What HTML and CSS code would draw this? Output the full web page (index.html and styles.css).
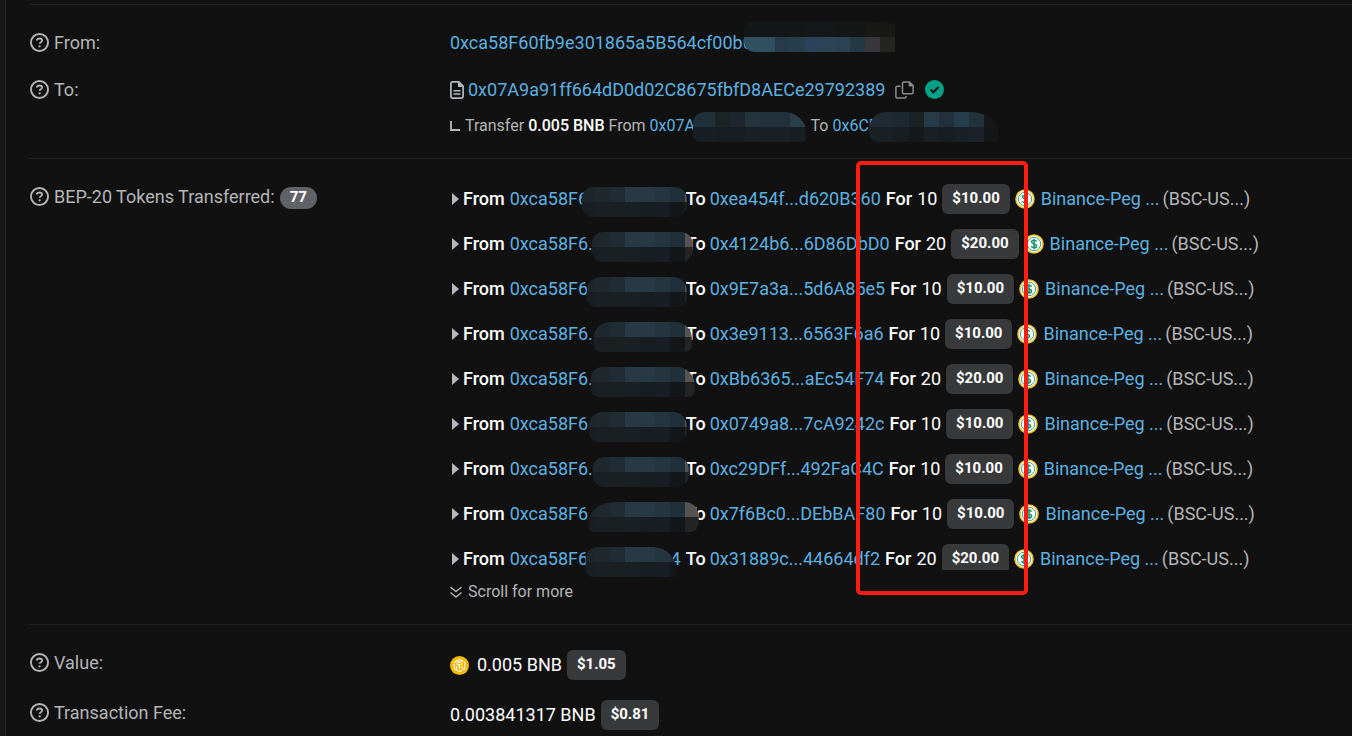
FILE: index.html
```html
<!DOCTYPE html>
<html lang="en">
<head>
  <meta charset="UTF-8">
  <meta name="viewport" content="width=device-width, initial-scale=1.0">
  <title>Transaction Details</title>
  <link rel="stylesheet" href="styles.css">
</head>

<body>
  <!-- shared icons -->
  <svg class="sprite" aria-hidden="true">
    <symbol id="help" viewBox="0 0 18 18">
      <circle cx="9" cy="9" r="8.1" fill="none" stroke="currentColor" stroke-width="1.8"/>
      <path d="M6.5 7.1C6.6 5.8 7.5 5.2 9 5.2s2.5.7 2.5 1.9c0 1.7-2.4 1.6-2.4 3.2" fill="none" stroke="currentColor" stroke-width="1.7"/>
      <circle cx="9.1" cy="12.6" r="1.1" fill="currentColor"/>
    </symbol>
    <symbol id="coin" viewBox="0 0 20 20">
      <circle cx="10" cy="10" r="9.8" fill="#f2c230"/>
      <circle cx="10" cy="10" r="8.2" fill="#fff"/>
      <circle cx="10" cy="10" r="6.7" fill="none" stroke="#2fa57f" stroke-width="1"/>
      <path d="M12.5 7.7c-.3-1-1.2-1.4-2.5-1.4s-2.4.6-2.4 1.7c0 2.6 5 1.2 5 3.9 0 1.2-1.1 1.8-2.6 1.8s-2.4-.6-2.7-1.6M10 4.8v10.4" fill="none" stroke="#159267" stroke-width="1.5"/>
    </symbol>
  </svg>

  <main class="card">
    <section class="group">
      <div class="row">
        <div class="label"><svg class="help"><use href="#help"/></svg>From:</div>
        <div class="value">
          <a href="#" class="address">0xca58F60fb9e301865a5B564cf00b0<span class="mask mask-from"></span></a>
        </div>
      </div>
      <div class="row">
        <div class="label"><svg class="help"><use href="#help"/></svg>To:</div>
        <div class="value">
          <div class="contract">
            <svg class="file" viewBox="0 0 14 18" fill="none" stroke="#b5b9bd" stroke-width="1.7">
              <path d="M2.5.9h6.3l4.3 4.3v10.4c0 .9-.6 1.5-1.5 1.5H2.5c-.9 0-1.6-.6-1.6-1.5V2.4C.9 1.500 1.600.9 2.500.9z"/>
              <path d="M8.500 1v4.500H13z" fill="#b5b9bd" stroke-width="1"/>
              <path d="M3.500 9.700h7M3.500 13h7" stroke-width="1.500"/>
            </svg>
            <a href="#" class="address">0x07A9a91ff664dD0d02C8675fbfD8AECe29792389</a>
            <button class="copy" aria-label="Copy address">
              <svg viewBox="0 0 19 18" fill="none" stroke="#8c8c8e" stroke-width="1.500">
                <path d="M8.800.9h5.600l3.700 3.700v6.800c0 .8-.5 1.300-1.300 1.300H8.800c-.8 0-1.300-.5-1.300-1.300V2.200c0-.8.5-1.300 1.300-1.300z"/>
                <path d="M14 1v4h4z" fill="#8c8c8e" stroke-width=".8"/>
                <path d="M5.500 5.300H2.200c-.8 0-1.300.5-1.300 1.300v9.200c0 .8.500 1.300 1.300 1.300h7.600c.8 0 1.300-.5 1.300-1.300v-.9"/>
              </svg>
            </button>
            <svg class="verified" viewBox="0 0 18 18">
              <circle cx="9" cy="9" r="9" fill="#00a186"/>
              <path d="M5.300 9l2.600 2.600 4.900-4.900" fill="none" stroke="#111" stroke-width="1.900"/>
            </svg>
          </div>
          <div class="internal">
            <svg class="corner" viewBox="0 0 10 10"><path d="M1 0v9h9" fill="none" stroke="#b5b9bd" stroke-width="1.800"/></svg>
            <span>Transfer</span>
            <b>0.005 BNB</b>
            <span>From</span>
            <a href="#" class="address internal-from">0x07A<span class="mask mask-internal-from"></span></a>
            <span>To</span>
            <a href="#" class="address">0x6CF<span class="mask mask-internal-to"></span></a>
          </div>
        </div>
      </div>
    </section>

    <section class="group">
      <div class="row">
        <div class="label"><svg class="help"><use href="#help"/></svg>BEP-20 Tokens Transferred: <span class="count">77</span></div>
        <div class="value">
          <ul class="transfers">
            <li>
              <i class="caret"></i><b>From</b>
              <a href="#" class="address sender">0xca58F6.<span class="mask mask-sender m1"></span></a>
              <b class="to">To</b> <a href="#" class="address">0xea454f...d620B360</a>
              <b>For</b> <span class="amount">10</span> <span class="badge">$10.00</span>
              <svg class="coin"><use href="#coin"/></svg>
              <a href="#" class="token">Binance-Peg ...</a><span class="symbol">(BSC-US...)</span>
            </li>
            <li>
              <i class="caret"></i><b>From</b>
              <a href="#" class="address sender">0xca58F6.<span class="mask mask-sender m2"></span></a>
              <b class="to">To</b> <a href="#" class="address">0x4124b6...6D86DbD0</a>
              <b>For</b> <span class="amount">20</span> <span class="badge">$20.00</span>
              <svg class="coin"><use href="#coin"/></svg>
              <a href="#" class="token">Binance-Peg ...</a><span class="symbol">(BSC-US...)</span>
            </li>
            <li>
              <i class="caret"></i><b>From</b>
              <a href="#" class="address sender">0xca58F6.<span class="mask mask-sender m3"></span></a>
              <b class="to">To</b> <a href="#" class="address">0x9E7a3a...5d6A85e5</a>
              <b>For</b> <span class="amount">10</span> <span class="badge">$10.00</span>
              <svg class="coin"><use href="#coin"/></svg>
              <a href="#" class="token">Binance-Peg ...</a><span class="symbol">(BSC-US...)</span>
            </li>
            <li>
              <i class="caret"></i><b>From</b>
              <a href="#" class="address sender">0xca58F6.<span class="mask mask-sender m4"></span></a>
              <b class="to">To</b> <a href="#" class="address">0x3e9113...6563F6a6</a>
              <b>For</b> <span class="amount">10</span> <span class="badge">$10.00</span>
              <svg class="coin"><use href="#coin"/></svg>
              <a href="#" class="token">Binance-Peg ...</a><span class="symbol">(BSC-US...)</span>
            </li>
            <li>
              <i class="caret"></i><b>From</b>
              <a href="#" class="address sender">0xca58F6.<span class="mask mask-sender m5"></span></a>
              <b class="to">To</b> <a href="#" class="address">0xBb6365...aEc54F74</a>
              <b>For</b> <span class="amount">20</span> <span class="badge">$20.00</span>
              <svg class="coin"><use href="#coin"/></svg>
              <a href="#" class="token">Binance-Peg ...</a><span class="symbol">(BSC-US...)</span>
            </li>
            <li>
              <i class="caret"></i><b>From</b>
              <a href="#" class="address sender">0xca58F6.<span class="mask mask-sender m6"></span></a>
              <b class="to">To</b> <a href="#" class="address">0x0749a8...7cA9242c</a>
              <b>For</b> <span class="amount">10</span> <span class="badge">$10.00</span>
              <svg class="coin"><use href="#coin"/></svg>
              <a href="#" class="token">Binance-Peg ...</a><span class="symbol">(BSC-US...)</span>
            </li>
            <li>
              <i class="caret"></i><b>From</b>
              <a href="#" class="address sender">0xca58F6.<span class="mask mask-sender m7"></span></a>
              <b class="to">To</b> <a href="#" class="address">0xc29DFf...492FaC4C</a>
              <b>For</b> <span class="amount">10</span> <span class="badge">$10.00</span>
              <svg class="coin"><use href="#coin"/></svg>
              <a href="#" class="token">Binance-Peg ...</a><span class="symbol">(BSC-US...)</span>
            </li>
            <li>
              <i class="caret"></i><b>From</b>
              <a href="#" class="address sender">0xca58F6.<span class="mask mask-sender m8"></span></a>
              <b class="to">To</b> <a href="#" class="address">0x7f6Bc0...DEbBAF80</a>
              <b>For</b> <span class="amount">10</span> <span class="badge">$10.00</span>
              <svg class="coin"><use href="#coin"/></svg>
              <a href="#" class="token">Binance-Peg ...</a><span class="symbol">(BSC-US...)</span>
            </li>
            <li>
              <i class="caret"></i><b>From</b>
              <a href="#" class="address sender">0xca58F6.<span>4</span><span class="mask mask-sender m9"></span></a>
              <b class="to">To</b> <a href="#" class="address">0x31889c...44664df2</a>
              <b>For</b> <span class="amount">20</span> <span class="badge">$20.00</span>
              <svg class="coin"><use href="#coin"/></svg>
              <a href="#" class="token">Binance-Peg ...</a><span class="symbol">(BSC-US...)</span>
            </li>
          </ul>
          <div class="more">
            <svg class="chevrons" viewBox="0 0 12 12"><path d="M.5 1L6 5.500 11.500 1M.5 6.500L6 11l5.500-4.500" fill="none" stroke="currentColor" stroke-width="1.400"/></svg>
            Scroll for more
          </div>
          <div class="highlight"></div>
        </div>
      </div>
    </section>

    <section class="group">
      <div class="row">
        <div class="label"><svg class="help"><use href="#help"/></svg>Value:</div>
        <div class="value price">
          <svg class="bnb" viewBox="0 0 18 18">
            <circle cx="9" cy="9" r="9" fill="#f0b90b"/>
            <path d="M9 3.200l5 2.900v5.800l-5 2.900-5-2.900V6.100zM6.300 7.200l2.700 1.600 2.700-1.600M9 8.800v3.400M6.500 4.700L9 6.200l2.500-1.500M6.300 9.800v2.200M11.700 9.800v2.200" fill="none" stroke="#fff" stroke-width="1.100" stroke-dasharray="4 .8"/>
          </svg>
          <span class="amount">0.005 BNB</span> <span class="badge">$1.05</span>
        </div>
      </div>
      <div class="row">
        <div class="label"><svg class="help"><use href="#help"/></svg>Transaction Fee:</div>
        <div class="value price"><span class="amount">0.003841317 BNB</span> <span class="badge">$0.81</span></div>
      </div>
    </section>
  </main>
</body>
</html>
```
FILE: styles.css
```css
*, *::before, *::after {
  box-sizing: border-box;
}

body {
  margin: 0;
  padding-left: 5px;
  min-height: 100vh;
  overflow: hidden;
  background: #171817;
  color: #b5b5b7;
  font-family: Roboto, "Liberation Sans", sans-serif;
  font-size: 18px;
  line-height: 27px;
}

a {
  color: #5cb0e0;
  text-decoration: none;
}

b {
  color: #fff;
  font-weight: 500;
}

.sprite {
  position: absolute;
  width: 0;
  height: 0;
}

.card {
  min-height: 100vh;
  padding: 4px 0 0 24px;
  border-left: 1px solid #262727;
  background: #111;
}

.group {
  display: flex;
  flex-direction: column;
  gap: 20px;
  padding: 24px 0 20px;
  border-top: 1px solid #222;
}

.group + .group {
  padding-top: 25px;
}

.row {
  display: flex;
}

.label {
  display: flex;
  align-items: center;
  align-self: flex-start;
  gap: 5px;
  width: 420px;
  flex: none;
}

.group + .group .label {
  margin-top: -1px;
}

.help {
  width: 19px;
  height: 19px;
}

.value {
  position: relative;
  flex: 1;
  white-space: nowrap;
}

.address {
  position: relative;
}

.contract, .internal, .price, .transfers li {
  display: flex;
  align-items: center;
  gap: 5px;
}

.price, .transfers li {
  line-height: 28px;
}

.file {
  width: 14px;
  height: 18px;
}

.contract {
  gap: 4px;
}

.copy {
  width: 19px;
  height: 18px;
  margin: 0 7px 0 6px;
  padding: 0;
  border: 0;
  background: none;
}

.copy svg {
  display: block;
  width: 19px;
  height: 18px;
}

.verified {
  width: 19px;
  height: 19px;
}

.internal {
  gap: 4px;
  margin-top: 11px;
  font-size: 16px;
  line-height: 24px;
}

.corner {
  width: 10px;
  height: 10px;
  margin-right: 1px;
}

.internal-from {
  width: 157px;
}

.count {
  height: 22px;
  margin-top: 3px;
  padding: 0 10px;
  border-radius: 11px;
  background: #5f6368;
  color: #fff;
  font-size: 15px;
  font-weight: 700;
  line-height: 21px;
}

.transfers {
  display: flex;
  flex-direction: column;
  gap: 15px;
  height: 386px;
  margin: 0;
  padding: 0;
  list-style: none;
}

.transfers li {
  flex: none;
}

.caret {
  margin: 0 -1px 0 2px;
  border: 6px solid transparent;
  border-left: 7px solid #b5b9bd;
  border-right: 0;
}

.sender {
  display: flex;
  justify-content: space-between;
  width: 171px;
}

.to {
  margin-right: -1px;
}

.amount {
  color: #fff;
}

.badge {
  height: 30px;
  padding: 0 10px;
  border-radius: 6px;
  background: #38393b;
  color: #fff;
  font-size: 15px;
  font-weight: 700;
  line-height: 29px;
}

/* the list is cut off just under its last line */
.transfers li:last-child .badge {
  clip-path: inset(0 0 4px);
}

.coin {
  width: 20px;
  height: 20px;
}

.token {
  margin-left: 1px;
}

.symbol {
  margin-left: -2px;
}

.more {
  display: flex;
  align-items: center;
  gap: 6px;
  margin-top: 10px;
  font-size: 16px;
  line-height: 24px;
}

.chevrons {
  width: 12px;
  height: 12px;
}

.bnb {
  width: 19px;
  height: 19px;
  margin-right: 3px;
}

/* red frame over the amounts */
.highlight {
  position: absolute;
  top: -23px;
  left: 406px;
  width: 172px;
  height: 434px;
  border: 4px solid #ff1d12;
  border-radius: 5px;
}

/* pixelated cover on the private part of an address, 15px cells */
.mask {
  position: absolute;
  top: 2px;
  z-index: 1;
  height: 30px;
  background-repeat: no-repeat;
  background-size: 100% 15px;
  background-position: 0 0, 0 15px;
}

.mask-sender {
  left: 70px;
  width: 120px;
  background-image:
    linear-gradient(90deg, #1e262c 15px, #1f282d 15px 30px, #202c33 30px 45px, #263944 45px 75px, #23353f 75px 90px, #20303a 90px 105px, #565452 105px),
    linear-gradient(90deg, #191e24 15px, #191f22 15px 30px, #1a2022 30px 45px, #1a2125 45px 60px, #171e22 60px 75px, #191e26 75px 90px, #14171a 90px 105px, #242423 105px);
}

.m1 { clip-path: inset(0 13px 0 2px round 12px); }
.m2 { clip-path: inset(0 7px 0 12px round 12px); }
.m3 { clip-path: inset(0 13px 0 7px round 14px 14px 9px 9px); }
.m4 { clip-path: inset(0 8px 0 14px round 16px 16px 7px 7px); }
.m5 { clip-path: inset(0 5px 0 11px round 12px 18px 7px 9px); }
.m6 { clip-path: inset(0 13px 0 9px round 14px 14px 9px 9px); }
.m7 { clip-path: inset(0 11px 0 13px round 12px); }
.m8 { clip-path: inset(0 1px 0 9px round 26px 14px 8px 4px / 20px 14px 10px 6px); }
.m9 { clip-path: inset(0 23px 0 6px round 12px 24px 4px 8px); }

.mask-from {
  top: -10px;
  left: 294px;
  width: 151px;
  background-image:
    linear-gradient(90deg, #141718 61px, #14181a 61px 91px, #141716 91px 121px, #181817 121px),
    linear-gradient(90deg, #304f60 31px, #263a49 31px 46px, #273f4b 46px 61px, #2a435b 61px 76px, #2b4556 76px 91px, #2a4254 91px 106px, #233845 106px 121px, #363638 121px 136px, #242422 136px);
  clip-path: inset(0 round 8px 20px 0 10px / 10px 4px 0 10px);
}

.mask-internal-from {
  top: -2px;
  left: 43px;
  width: 114px;
  background-image:
    linear-gradient(90deg, #1f3039 22px, #1a2325 22px 37px, #1b262e 37px 52px, #24343c 52px 67px, #21323c 67px 97px, #293f49 97px),
    linear-gradient(90deg, #181f24 22px, #171d21 22px 52px, #191f25 52px 67px, #1a2026 67px 97px, #171f23 97px 112px, #151617 112px);
  clip-path: inset(0 round 12px 22px 4px 8px);
}

.mask-internal-to {
  top: -2px;
  left: 37px;
  width: 129px;
  background-image:
    linear-gradient(90deg, #1f2a32 25px, #1c2930 25px 40px, #1a2226 40px 55px, #263b47 55px 70px, #21303b 70px 85px, #263e4c 85px 100px, #22323b 100px 115px, #151817 115px),
    linear-gradient(90deg, #192026 25px, #171d22 25px 40px, #15191c 40px 55px, #182025 55px 70px, #171d22 70px 85px, #182126 85px 100px, #1b2029 100px 115px, #141717 115px);
  clip-path: inset(0 round 16px 28px 4px 8px / 16px 20px 4px 10px);
}
```
